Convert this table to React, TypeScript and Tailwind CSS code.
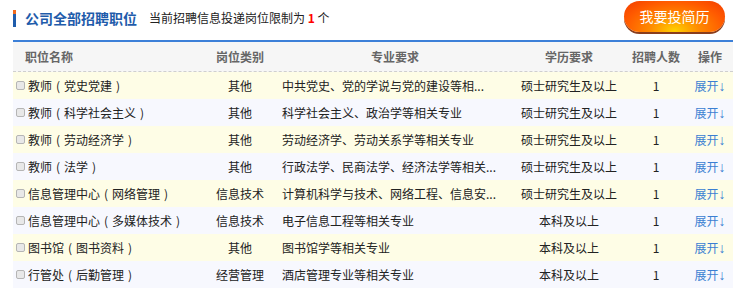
import React from "react";

type Job = {
  name: string;
  type: string;
  major: string;
  degree: string;
  count: number;
};

const jobs: Job[] = [
  { name: "教师（党史党建）", type: "其他", major: "中共党史、党的学说与党的建设等相...", degree: "硕士研究生及以上", count: 1 },
  { name: "教师（科学社会主义）", type: "其他", major: "科学社会主义、政治学等相关专业", degree: "硕士研究生及以上", count: 1 },
  { name: "教师（劳动经济学）", type: "其他", major: "劳动经济学、劳动关系学等相关专业", degree: "硕士研究生及以上", count: 1 },
  { name: "教师（法学）", type: "其他", major: "行政法学、民商法学、经济法学等相关...", degree: "硕士研究生及以上", count: 1 },
  { name: "信息管理中心（网络管理）", type: "信息技术", major: "计算机科学与技术、网络工程、信息安...", degree: "硕士研究生及以上", count: 1 },
  { name: "信息管理中心（多媒体技术）", type: "信息技术", major: "电子信息工程等相关专业", degree: "本科及以上", count: 1 },
  { name: "图书馆（图书资料）", type: "其他", major: "图书馆学等相关专业", degree: "本科及以上", count: 1 },
  { name: "行管处（后勤管理）", type: "经营管理", major: "酒店管理专业等相关专业", degree: "本科及以上", count: 1 },
];

const cols = "grid grid-cols-[192px_70px_240px_108px_66px_44px]";

// full-width brackets, drawn centred in a 12px box like the original font does
function JobName({ text }: { text: string }) {
  const parts = text.split(/([（）])/);
  return (
    <span className="ml-[3px] whitespace-nowrap">
      {parts.map((p, i) =>
        p === "（" || p === "）" ? (
          <span key={i} className="inline-block w-[12px] text-center">
            {p === "（" ? "(" : ")"}
          </span>
        ) : (
          <span key={i}>{p}</span>
        )
      )}
    </span>
  );
}

export default function App() {
  return (
    <div
      className="w-[744px] h-[291px] bg-white overflow-hidden"
      style={{ fontFamily: '"Noto Sans CJK SC", "Noto Sans", sans-serif' }}
    >
      {/* title bar */}
      <div className="flex items-center h-[40px] pl-[13px] pr-[19px]">
        <div className="flex flex-col w-[3px] h-[17px] mt-[-4px]">
          <div className="h-[4px] bg-[#f26b1d]" />
          <div className="flex-1 bg-[#1f5cab]" />
        </div>
        <h2 className="ml-[9px] text-[14px] leading-none font-bold text-[#1f5cab] mt-[-4px]">公司全部招聘职位</h2>
        <p className="ml-[12px] text-[12px] leading-none text-[#222] mt-[-4px]">
          当前招聘信息投递岗位限制为 <span className="text-[#f00] font-bold">1</span> 个
        </p>
        <button className="ml-auto mb-[8px] w-[101px] h-[31px] rounded-full text-white text-[14px] leading-none bg-[radial-gradient(ellipse_at_50%_95%,#ffd000_0%,#ff8a00_35%,#ff5a00_70%,#f23c00_100%)] shadow-[0_2px_0_#8a3d1c]">
          我要投简历
        </button>
      </div>

      {/* table */}
      <div className="mx-[13px] w-[720px] border-t-2 border-[#3d80d8]">
        <div className={`${cols} h-[30px] items-center bg-[#f6f6f6] text-[12px] font-bold text-[#666] border-b border-dashed border-[#cfcfcf]`}>
          <div className="pl-[12px]">职位名称</div>
          <div className="text-center">岗位类别</div>
          <div className="text-center">专业要求</div>
          <div className="text-center">学历要求</div>
          <div className="text-center">招聘人数</div>
          <div className="text-center pr-[2px]">操作</div>
        </div>
        {jobs.map((job, i) => (
          <div
            key={job.name}
            className={`${cols} h-[27px] items-center text-[12px] text-[#222] ${i % 2 === 0 ? "bg-[#fefde6]" : "bg-[#f7f8fe]"}`}
          >
            <div className="flex items-center pl-[3px]">
              <span className="w-[9px] h-[9px] rounded-[2px] border border-[#b5b5b5] bg-[#e8e8e8]" />
              <JobName text={job.name} />
            </div>
            <div className="text-center">{job.type}</div>
            <div className="pl-[7px] whitespace-nowrap">{job.major}</div>
            <div className="text-center">{job.degree}</div>
            <div className="text-center">{job.count}</div>
            <div className="text-center text-[#3b7fd2] pr-[2px] whitespace-nowrap">
              展开<span className="font-['Liberation_Sans',sans-serif] text-[14px] leading-none">↓</span>
            </div>
          </div>
        ))}
      </div>
    </div>
  );
}
